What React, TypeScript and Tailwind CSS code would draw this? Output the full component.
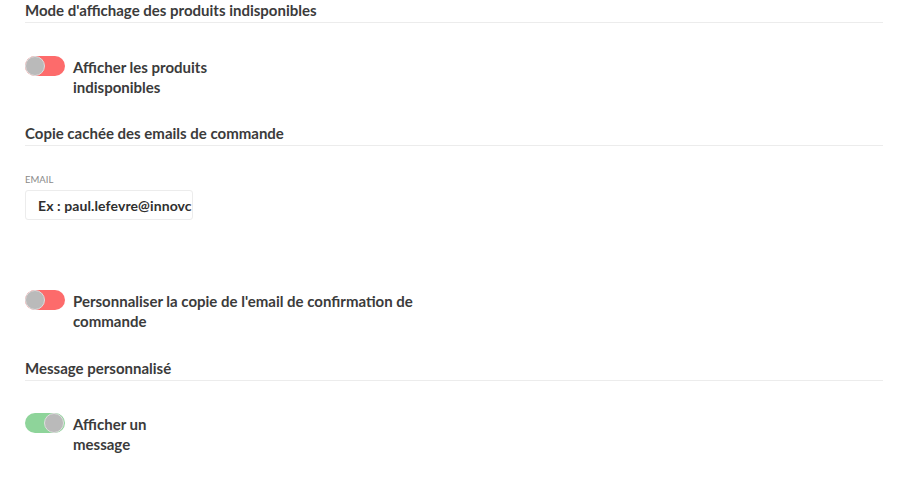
const font = { fontFamily: "Lato, 'Open Sans', sans-serif" };

function Heading({ children }: { children: string }) {
  return (
    <div className="border-b border-[#ececec] pb-[2px] text-[15px] font-bold leading-[20px] text-[#3b3b3b]">
      {children}
    </div>
  );
}

function Toggle({ on, label, width }: { on: boolean; label: string; width: string }) {
  return (
    <div className="flex items-start gap-[8px]">
      <div
        className={
          "relative h-[20px] w-[40px] shrink-0 rounded-full " +
          (on ? "bg-[#8ed49a]" : "bg-[#fd6b6b]")
        }
      >
        <div
          className={
            "absolute top-0 h-[20px] w-[20px] rounded-full border-[1.5px] border-[#dedede] bg-[#bababa] " +
            (on ? "right-[1px]" : "left-0")
          }
        />
      </div>
      <div
        className={
          "mt-[1px] text-[15px] font-bold leading-[20px] text-[#3b3b3b] " + width
        }
      >
        {label}
      </div>
    </div>
  );
}

export default function App() {
  return (
    <div className="min-h-[500px] w-[900px] bg-white" style={font}>
      <div className="w-[883px] pl-[25px]">
        {/* unavailable products */}
        <Heading>Mode d'affichage des produits indisponibles</Heading>
        <div className="mt-[33px]">
          <Toggle on={false} label="Afficher les produits indisponibles" width="w-[165px]" />
        </div>

        {/* bcc */}
        <div className="mt-[26px]">
          <Heading>Copie cachée des emails de commande</Heading>
        </div>
        <div className="mt-[28px] text-[9.5px] leading-[12px] text-[#8a8a8a]">EMAIL</div>
        <div className="mt-[4px] flex h-[30px] w-[168px] items-center overflow-hidden rounded-[3px] border border-[#ececec] pl-[12px] pr-[4px]">
          <span className="whitespace-nowrap text-[14px] font-bold tracking-[0.1px] text-[#2f2f2f]">
            Ex : paul.lefevre@innovc
          </span>
        </div>
        <div className="mt-[70px]">
          <Toggle
            on={false}
            label="Personnaliser la copie de l'email de confirmation de commande"
            width="w-[370px]"
          />
        </div>

        {/* custom message */}
        <div className="mt-[27px]">
          <Heading>Message personnalisé</Heading>
        </div>
        <div className="mt-[32px]">
          <Toggle on={true} label="Afficher un message" width="w-[100px]" />
        </div>
      </div>
    </div>
  );
}
